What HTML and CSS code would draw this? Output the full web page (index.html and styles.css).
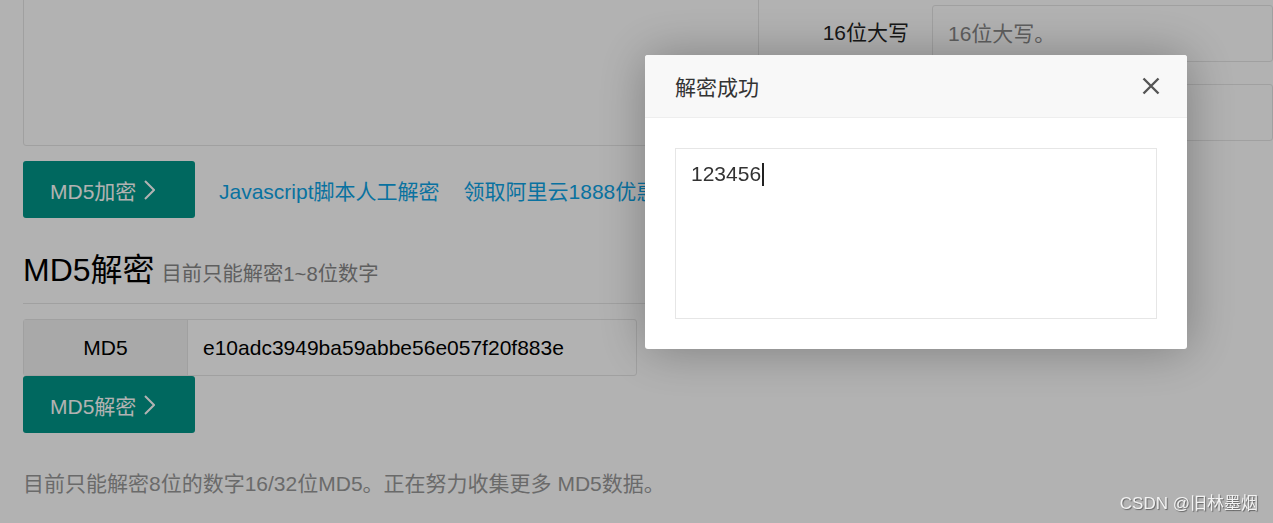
FILE: index.html
```html
<!DOCTYPE html>
<html lang="zh-CN">
<head>
    <meta charset="UTF-8">
    <meta name="viewport" content="width=device-width, initial-scale=1.0">
    <title>MD5加密解密</title>
    <link rel="stylesheet" href="styles.css">
</head>
<body>
    <div class="page">
        <div class="left">
            <div class="src-box"></div>
            <div class="actions">
                <button class="btn">MD5加密
                    <svg class="chev" width="12" height="20" viewBox="0 0 12 20"><polyline points="2,1 11,10 2,19" fill="none" stroke="#fff" stroke-width="2"/></svg>
                </button>
                <a class="link" href="#">Javascript脚本人工解密</a>
                <a class="link" href="#">领取阿里云1888优惠券</a>
            </div>
            <div class="section-title">
                <h2>MD5解密</h2>
                <span class="sub">目前只能解密1~8位数字</span>
            </div>
            <div class="md5-group">
                <div class="group-label">MD5</div>
                <div class="group-input">e10adc3949ba59abbe56e057f20f883e</div>
            </div>
            <button class="btn">MD5解密
                <svg class="chev" width="12" height="20" viewBox="0 0 12 20"><polyline points="2,1 11,10 2,19" fill="none" stroke="#fff" stroke-width="2"/></svg>
            </button>
            <p class="note">目前只能解密8位的数字16/32位MD5。正在努力收集更多 MD5数据。</p>
        </div>
        <div class="right">
            <div class="form-row">
                <div class="form-label">16位大写</div>
                <div class="form-input">16位大写。</div>
            </div>
            <div class="form-row">
                <div class="form-label">16位小写</div>
                <div class="form-input">16位小写。</div>
            </div>
        </div>
    </div>

    <div class="shade"></div>

    <div class="layer">
        <div class="layer-title">
            <span>解密成功</span>
            <svg class="layer-close" width="18" height="18" viewBox="0 0 18 18"><path d="M1.5 1.5 L16.5 16.5 M16.5 1.5 L1.5 16.5" stroke="#555" stroke-width="2.4" fill="none"/></svg>
        </div>
        <div class="layer-body">
            <div class="result">123456<span class="caret"></span></div>
        </div>
    </div>

    <div class="watermark">CSDN @旧林墨烟</div>
</body>
</html>
```

FILE: styles.css
```css
body {
    margin: 0;
    font-family: "Liberation Sans", "Noto Sans CJK SC", sans-serif;
    background: #fff;
    color: #333;
    overflow: hidden;
}
.page {
    display: flex;
    margin-top: -20px;
    padding-left: 23px;
}
.left {
    width: 736px;
}
.src-box {
    height: 164px;
    border: 1px solid #e6e6e6;
    border-radius: 3px;
}
.actions {
    display: flex;
    align-items: center;
    margin-top: 15px;
}
.btn {
    display: flex;
    align-items: center;
    gap: 7px;
    width: 172px;
    height: 57px;
    padding: 0 27px;
    border: none;
    border-radius: 3px;
    background: #009688;
    color: #fff;
    font-family: inherit;
    font-size: 21px;
    cursor: pointer;
}
.chev {
    margin-top: 1px;
}
.link {
    margin-left: 24px;
    color: #0ea4e6;
    font-size: 21px;
    text-decoration: none;
    white-space: nowrap;
}
.section-title {
    margin-top: 32px;
    display: flex;
    align-items: baseline;
    height: 40px;
    line-height: 40px;
    border-bottom: 1px solid #e6e6e6;
    padding-bottom: 13px;
    width: 622px;
}
.section-title h2 {
    margin: 0;
    font-size: 32px;
    font-weight: normal;
    color: #000;
}
.sub {
    margin-left: 7px;
    font-size: 20.3px;
    color: #888;
}
.md5-group {
    display: flex;
    width: 614px;
    height: 57px;
    margin-top: 15px;
    border: 1px solid #e6e6e6;
    border-radius: 3px;
    box-sizing: border-box;
    font-size: 21px;
}
.group-label {
    width: 163px;
    display: flex;
    align-items: center;
    justify-content: center;
    background: #f2f2f2;
    border-right: 1px solid #e6e6e6;
    color: #000;
}
.group-input {
    display: flex;
    align-items: center;
    padding-left: 15px;
    color: #000;
}
.note {
    margin: 36px 0 0;
    line-height: 30px;
    font-size: 21px;
    color: #999;
    white-space: nowrap;
}
.right {
    flex: 1;
    padding-top: 25px;
}
.form-row {
    display: flex;
    height: 57px;
    margin-bottom: 22px;
    font-size: 21px;
}
.form-label {
    width: 150px;
    padding: 0 23px 5px 0;
    display: flex;
    align-items: center;
    justify-content: flex-end;
    color: #222;
}
.form-input {
    flex: 1;
    display: flex;
    align-items: center;
    padding: 0 0 4px 15px;
    border: 1px solid #e6e6e6;
    border-radius: 3px;
    color: #888;
}
.shade {
    position: fixed;
    inset: 0;
    background: rgba(0, 0, 0, 0.3);
}
.layer {
    position: fixed;
    left: 645px;
    top: 55px;
    width: 542px;
    background: #fff;
    border-radius: 3px;
    box-shadow: 1px 1px 50px rgba(0, 0, 0, 0.3);
    overflow: hidden;
}
.layer-title {
    display: flex;
    align-items: center;
    justify-content: space-between;
    height: 62px;
    padding: 0 27px 0 30px;
    background: #f8f8f8;
    border-bottom: 1px solid #eee;
    font-size: 21px;
    color: #333;
}
.layer-body {
    padding: 30px;
}
.result {
    height: 139px;
    padding: 11px 15px 19px;
    border: 1px solid #e6e6e6;
    font-size: 21px;
    line-height: 27px;
    color: #333;
}
.caret {
    display: inline-block;
    width: 2px;
    height: 23px;
    margin-left: 1px;
    vertical-align: -5px;
    background: #222;
}
.watermark {
    position: fixed;
    right: 15px;
    bottom: 9px;
    font-size: 17px;
    color: #f2f2f2;
    text-shadow: 1px 1px 1px rgba(0, 0, 0, 0.45);
}
```
